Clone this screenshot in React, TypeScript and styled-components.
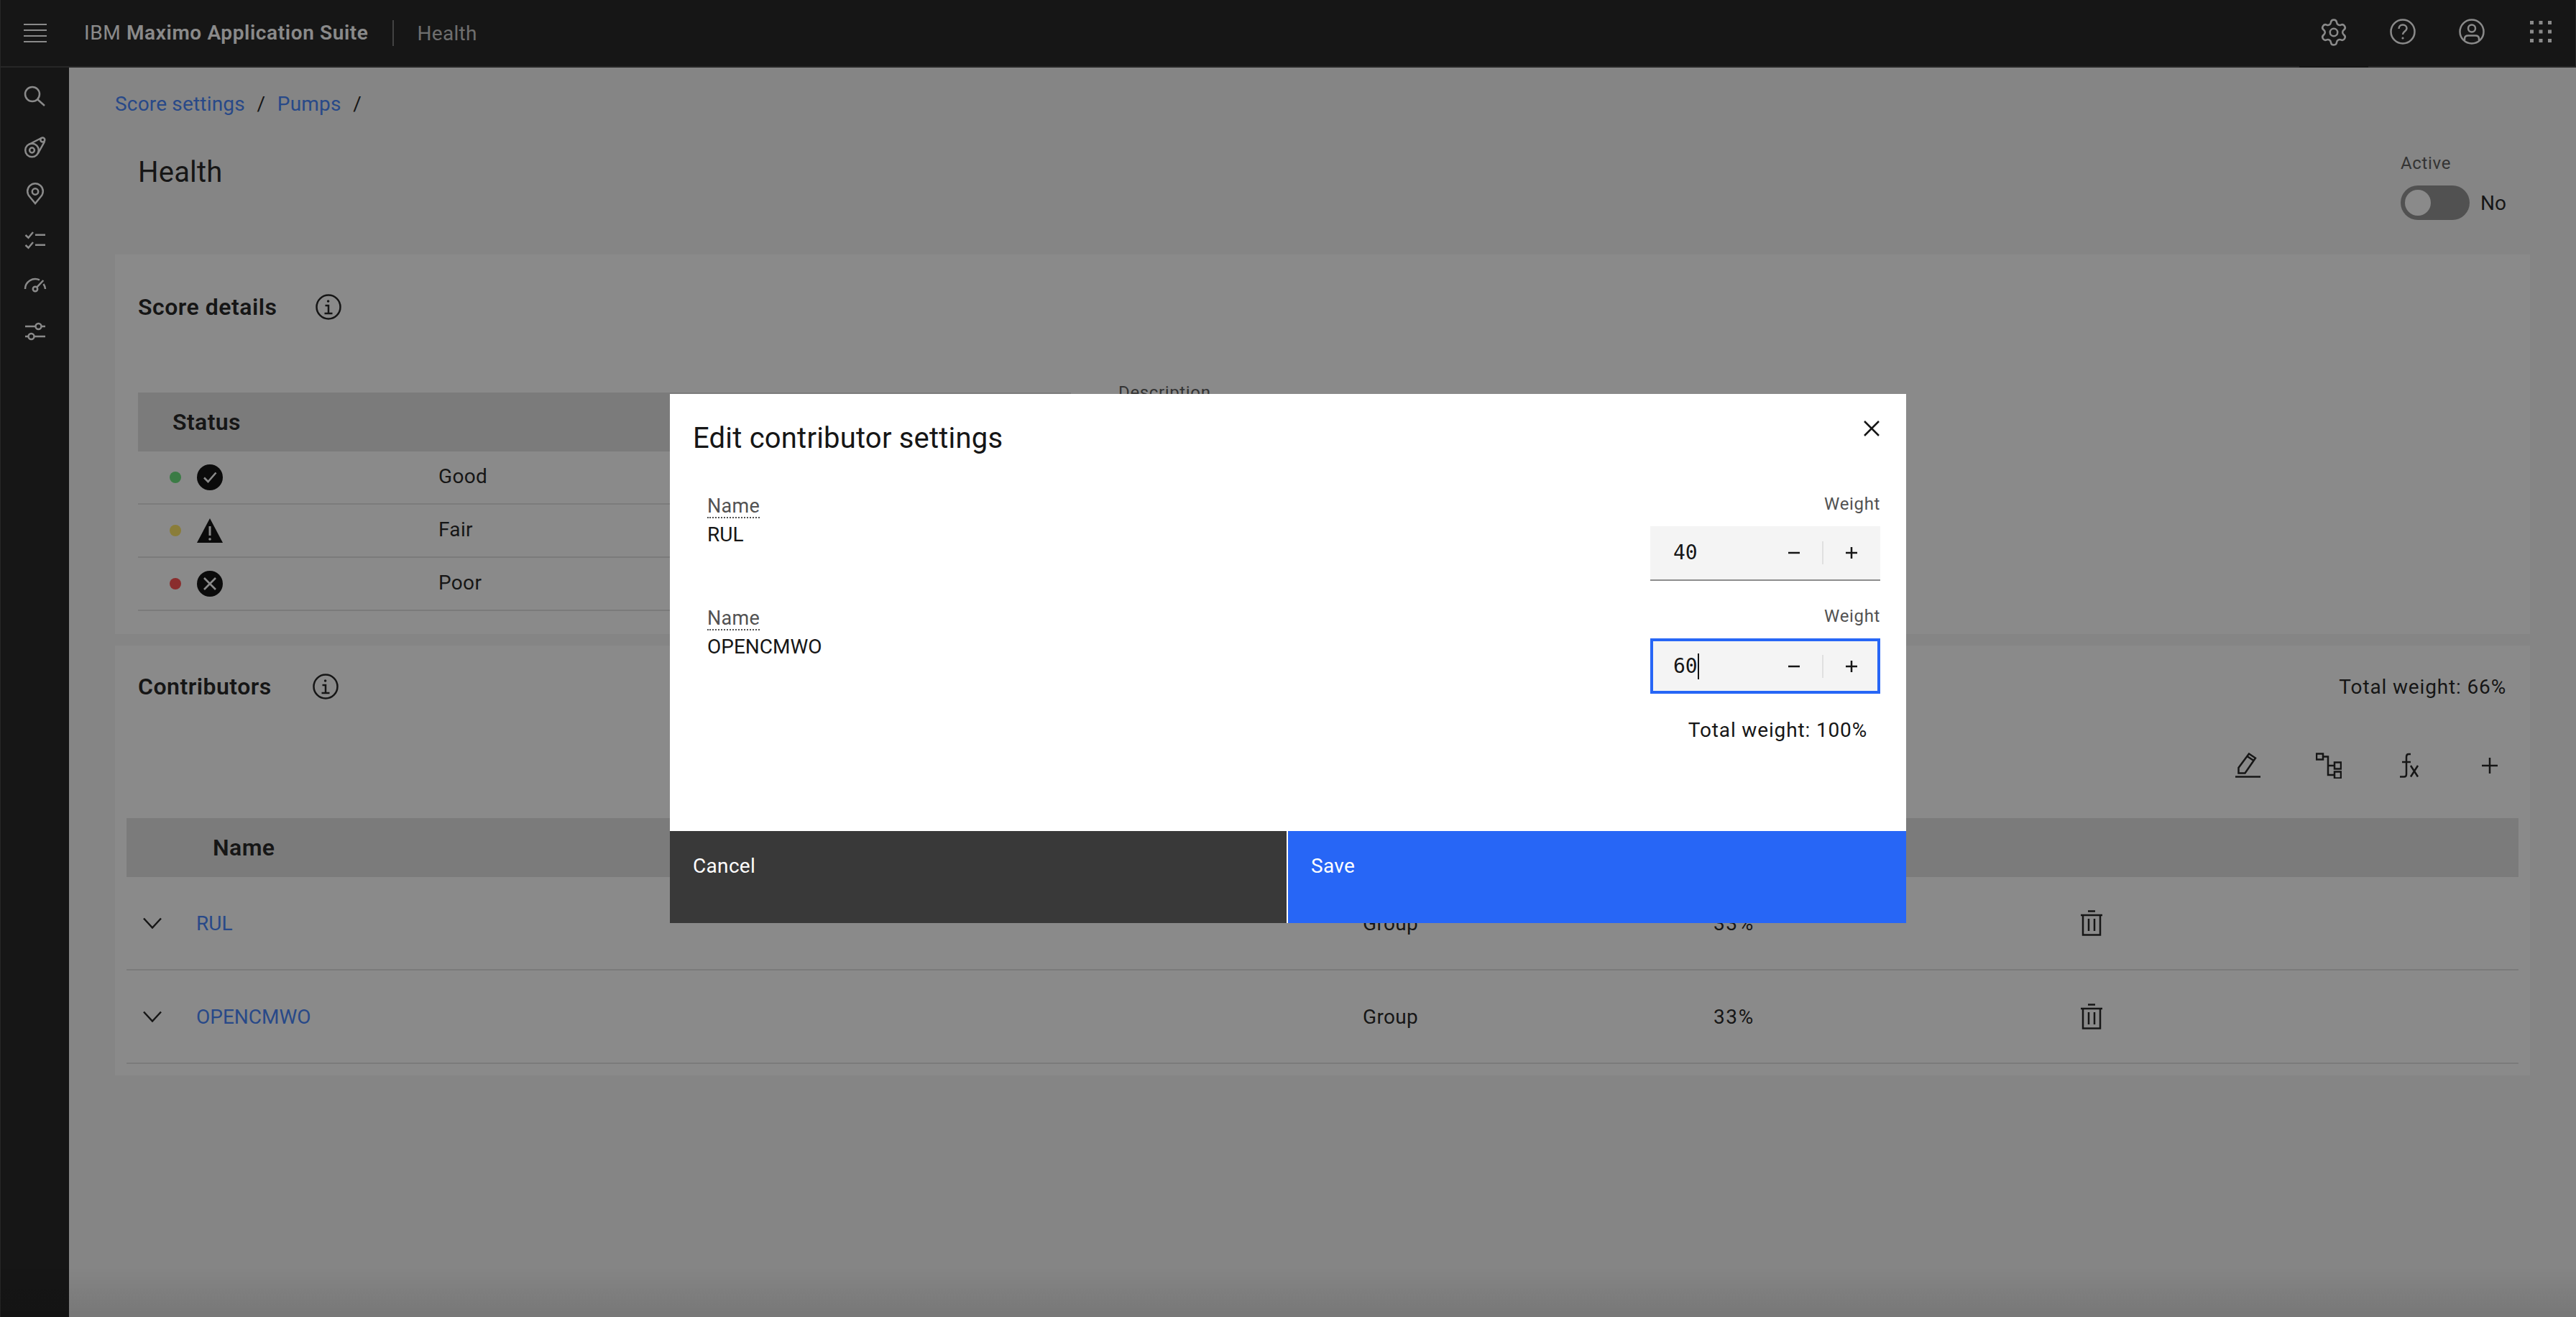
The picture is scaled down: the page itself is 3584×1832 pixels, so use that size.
import React from 'react';
import styled, { createGlobalStyle } from 'styled-components';
import { Settings } from 'lucide-react';

const GlobalStyle = createGlobalStyle`
  html, body {
    margin: 0;
    padding: 0;
    height: 100%;
    background: #f4f4f4;
    font-family: Roboto, "Liberation Sans", sans-serif;
    color: #161616;
    overflow: hidden;
  }
  * { box-sizing: border-box; }
`;

const Shell = styled.div`
  display: grid;
  grid-template-columns: 96px 1fr;
  grid-template-rows: 94px 1fr;
  height: 100vh;
`;

/* top bar */
const TopBar = styled.header`
  grid-column: 1 / -1;
  display: flex;
  align-items: center;
  height: 94px;
  background: #161616;
  border-bottom: 2px solid #393939;
  border-left: 1px solid #393939;
  border-right: 1px solid #393939;
`;

const MenuButton = styled.div`
  width: 95px;
  height: 92px;
  display: flex;
  flex-direction: column;
  align-items: center;
  justify-content: center;
  gap: 6px;
`;

const MenuLine = styled.span`
  display: block;
  width: 32px;
  height: 2px;
  background: #fff;
`;

const Brand = styled.div`
  margin-left: 21px;
  font-size: 28px;
  color: #fff;
  letter-spacing: 0.62px;
  padding-right: 33px;
  border-right: 2px solid #6f6f6f;
  height: 36px;
  line-height: 36px;
  strong { font-weight: 600; }
`;

const AppName = styled.div`
  margin-left: 33px;
  font-size: 28px;
  color: #c6c6c6;
  letter-spacing: 0.3px;
`;

const TopActions = styled.div`
  margin-left: auto;
  display: flex;
`;

const TopAction = styled.div<{ $active?: boolean }>`
  width: 96px;
  height: ${(p) => (p.$active ? '94px' : '92px')};
  margin-top: ${(p) => (p.$active ? '2px' : '0')};
  padding-bottom: ${(p) => (p.$active ? '4px' : '0')};
  background: #161616;
  display: flex;
  align-items: center;
  justify-content: center;
  color: #fff;
`;

/* left rail */
const Rail = styled.nav`
  background: #161616;
  border-left: 1px solid #393939;
  padding-top: 7px;
  display: flex;
  flex-direction: column;
  color: #fff;
`;

const RailItem = styled.div<{ $gapBelow?: boolean }>`
  height: 64px;
  margin-bottom: ${(p) => (p.$gapBelow ? '8px' : '0')};
  display: flex;
  align-items: center;
  justify-content: center;
`;

/* page */
const Main = styled.main`
  padding: 33px 64px 0;
  min-width: 0;
`;

const Breadcrumb = styled.div`
  display: flex;
  height: 36px;
  align-items: center;
  font-size: 28px;
  line-height: 36px;
  letter-spacing: 0.18px;
`;

const Crumb = styled.a`
  color: #3a7cfb;
`;

const CrumbSep = styled.span`
  width: 45px;
  text-align: center;
`;

const PageHead = styled.div`
  height: 191px;
  display: flex;
  justify-content: space-between;
  padding: 0 33px 0 32px;
`;

const PageTitle = styled.h1`
  margin: 53px 0 0;
  font-size: 40px;
  line-height: 48px;
  font-weight: 400;
  letter-spacing: 0.2px;
`;

const ActiveField = styled.div`
  margin-top: 48px;
`;

const FieldLabel = styled.div`
  font-size: 24px;
  line-height: 32px;
  letter-spacing: 0.64px;
  color: #525252;
`;

const ToggleRow = styled.div`
  display: flex;
  align-items: center;
  margin-top: 15px;
  gap: 15px;
  font-size: 28px;
`;

const ToggleTrack = styled.div`
  width: 96px;
  height: 48px;
  border-radius: 24px;
  background: #8d8d8d;
  padding: 6px;
`;

const ToggleKnob = styled.div`
  width: 36px;
  height: 36px;
  border-radius: 50%;
  background: #fff;
`;

const Card = styled.section<{ $tight?: boolean }>`
  background: #fff;
  margin-bottom: 16px;
  padding: ${(p) => (p.$tight ? '37px 16px 16px' : '53px 32px 32px')};
`;

const CardHead = styled.div<{ $inset?: boolean }>`
  display: flex;
  align-items: center;
  padding: ${(p) => (p.$inset ? '0 17px 0 16px' : '0')};
`;

const CardTitle = styled.h2`
  margin: 0;
  font-size: 32px;
  line-height: 40px;
  font-weight: 600;
  letter-spacing: 0.5px;
`;

const InfoSlot = styled.span<{ $offset: number }>`
  display: flex;
  margin-left: ${(p) => p.$offset}px;
`;

const TotalWeight = styled.div`
  margin-left: auto;
  font-size: 28px;
  letter-spacing: 0.85px;
`;

/* score details */
const DetailsRow = styled.div`
  display: flex;
  margin-top: 99px;
  gap: 66px;
`;

const StatusTable = styled.div`
  width: 1298px;
`;

const DescriptionField = styled(FieldLabel)`
  margin-top: -16px;
`;

const HeadRow = styled.div`
  height: 82px;
  background: #e0e0e0;
  display: flex;
  align-items: center;
  font-size: 32px;
  font-weight: 600;
  letter-spacing: 0.4px;
`;

const StatusHead = styled(HeadRow)`
  padding-left: 48px;
`;

const StatusRow = styled.div`
  display: grid;
  grid-template-columns: 418px 1fr;
  align-items: center;
  height: 74px;
  border-bottom: 2px solid #e0e0e0;
  font-size: 28px;
  letter-spacing: 0.32px;
`;

const StatusCell = styled.div`
  display: flex;
  align-items: center;
  padding-left: 44px;
  gap: 22px;
`;

const StatusName = styled.span`
  padding-bottom: 4px;
`;

const Dot = styled.span<{ $color: string }>`
  width: 16px;
  height: 16px;
  border-radius: 50%;
  background: ${(p) => p.$color};
`;

/* contributors */
const Toolbar = styled.div`
  display: flex;
  justify-content: flex-end;
  gap: 48px;
  padding-right: 8px;
  margin: 58px 0 41px;
`;

const ToolButton = styled.div`
  width: 64px;
  height: 64px;
  display: flex;
  align-items: center;
  justify-content: center;
`;

const ContributorHead = styled(HeadRow)`
  padding-left: 120px;
`;

const ContributorRow = styled.div`
  display: grid;
  grid-template-columns: 97px 1623px 488px 508px 1fr;
  align-items: center;
  height: 130px;
  border-bottom: 2px solid #e0e0e0;
  font-size: 28px;
  letter-spacing: 0.32px;
`;

const ExpandCell = styled.div`
  display: flex;
  padding-left: 23px;
`;

const RowLink = styled.a`
  color: #3a7cfb;
  letter-spacing: 0;
`;

const Percent = styled.span`
  letter-spacing: 1.6px;
`;

/* modal */
const Overlay = styled.div`
  position: fixed;
  inset: 0;
  background:
    linear-gradient(to top, rgba(0, 0, 0, 0.1), rgba(0, 0, 0, 0) 70px),
    rgba(22, 22, 22, 0.5);
  display: flex;
  align-items: center;
  justify-content: center;
`;

const Modal = styled.div`
  position: relative;
  width: 1720px;
  height: 736px;
  background: #fff;
  display: flex;
  flex-direction: column;
`;

const CloseButton = styled.div`
  position: absolute;
  top: 0;
  right: 0;
  width: 96px;
  height: 96px;
  display: flex;
  align-items: center;
  justify-content: center;
`;

const ModalBody = styled.div`
  flex: 1;
  padding: 38px 36px 0 32px;
`;

const ModalTitle = styled.h3`
  margin: 0 0 51px;
  font-size: 40px;
  line-height: 48px;
  font-weight: 400;
  letter-spacing: 0.2px;
`;

const ContributorField = styled.div`
  display: flex;
  justify-content: space-between;
  padding-left: 20px;
  margin-bottom: 33px;
`;

const NameBlock = styled.div`
  padding-top: 4px;
`;

const NameLabel = styled.span`
  display: inline-block;
  font-size: 27px;
  line-height: 30px;
  letter-spacing: 0.3px;
  color: #525252;
  border-bottom: 2px dotted #525252;
`;

const NameValue = styled.div`
  margin-top: 5px;
  font-size: 28px;
  line-height: 36px;
`;

const WeightBlock = styled.div`
  width: 320px;
  display: flex;
  flex-direction: column;
  align-items: flex-end;
`;

const WeightLabel = styled(FieldLabel)`
  margin-bottom: 15px;
`;

const NumberInput = styled.div<{ $focused?: boolean }>`
  width: 320px;
  height: ${(p) => (p.$focused ? '77px' : '76px')};
  background: #f4f4f4;
  display: flex;
  align-items: center;
  padding-left: 32px;
  border-bottom: 2px solid #8d8d8d;
  ${(p) => p.$focused && 'border-bottom: 0; outline: 4px solid #2766f6; outline-offset: -4px;'}
`;

const NumberValue = styled.span`
  font-family: "DejaVu Sans Mono", "Liberation Mono", monospace;
  font-size: 28px;
  line-height: 36px;
  flex: 1;
  display: flex;
  align-items: center;
`;

const Caret = styled.span`
  display: inline-block;
  width: 2px;
  height: 36px;
  background: #161616;
`;

const StepButton = styled.div`
  width: 80px;
  height: 32px;
  display: flex;
  align-items: center;
  justify-content: center;
`;

const StepDivider = styled.span`
  width: 2px;
  height: 32px;
  background: #e0e0e0;
  margin: 0 -1px;
`;

const TotalLine = styled.div`
  text-align: right;
  margin-top: 3px;
  padding-right: 18px;
  font-size: 28px;
  line-height: 36px;
  letter-spacing: 0.85px;
`;

const ModalFooter = styled.div`
  display: grid;
  grid-template-columns: 858px 1fr;
  gap: 2px;
  height: 128px;
`;

const FooterButton = styled.div<{ $primary?: boolean }>`
  background: ${(p) => (p.$primary ? '#2766f6' : '#393939')};
  color: #fff;
  font-size: 28px;
  line-height: 36px;
  letter-spacing: 0.32px;
  padding: 31px 32px;
`;

/* icons, all on a pixel grid of their own */
const Line = styled.svg`
  fill: none;
  stroke: currentColor;
  stroke-width: 2.5;
  display: block;
  flex: none;
`;

const Ink = styled.span`
  display: flex;
  color: #161616;
`;

const RailSearch = () => (
  <Line width="32" height="32" viewBox="0 0 32 32">
    <circle cx="12" cy="14" r="10" />
    <path d="M19.5 21.5 29 30" />
  </Line>
);

const RailBelt = () => (
  <Line width="32" height="32" viewBox="0 0 32 32">
    <circle cx="11.5" cy="20" r="9.3" />
    <circle cx="11.5" cy="20" r="3.4" />
    <circle cx="26.3" cy="5.6" r="3" />
    <path d="M7 12 24.5 3M19.5 25 29 8" />
  </Line>
);

const RailPin = () => (
  <Line width="32" height="32" viewBox="0 0 32 32">
    <path d="M16 30 8.2 20.5A10.8 10.8 0 1 1 23.8 20.5Z" />
    <circle cx="16" cy="13.5" r="4.2" />
  </Line>
);

const RailChecklist = () => (
  <Line width="32" height="32" viewBox="0 0 32 32">
    <path d="M2.5 10 6.5 13.7 13 6M16 9.7H30M2.5 24 6.5 27.7 13 20M16 23.7H30" />
  </Line>
);

const RailGauge = () => (
  <Line width="32" height="32" viewBox="0 0 32 32">
    <path d="M2 21A14 14 0 0 1 22 8.4M27.5 14A14 14 0 0 1 30 21" />
    <circle cx="16" cy="21" r="3.2" />
    <path d="M18.2 18.6 27.3 9" />
  </Line>
);

const RailSliders = () => (
  <Line width="32" height="32" viewBox="0 0 32 32">
    <path d="M2 9H16.5M24.5 9H30M2 23H6.5M14.5 23H30" />
    <circle cx="20.5" cy="9" r="4" />
    <circle cx="10.5" cy="23" r="4" />
  </Line>
);

const HelpIcon = () => (
  <Line width="36" height="36" viewBox="0 0 36 36">
    <circle cx="18" cy="18" r="16.5" />
    <path d="M12.5 14C12.5 10.5 15 8.5 18 8.5S23.5 10.5 23.5 13.5C23.5 17.5 18 17.5 18 22" />
    <circle cx="18" cy="27" r="1.6" fill="currentColor" stroke="none" />
  </Line>
);

const UserIcon = () => (
  <Line width="36" height="36" viewBox="0 0 36 36">
    <circle cx="18" cy="18" r="16.5" />
    <circle cx="18" cy="13.5" r="5" />
    <path d="M8 30V28C8 25 10 23.5 13 23.5H23C26 23.5 28 25 28 28V30" />
  </Line>
);

const GridIcon = () => (
  <svg width="30" height="30" viewBox="0 0 30 30" fill="currentColor" style={{ display: 'block' }}>
    {[0, 12.5, 25].map((y) =>
      [0, 12.5, 25].map((x) => <rect key={`${x}-${y}`} x={x} y={y} width="5" height="5" />),
    )}
  </svg>
);

const InfoIcon = () => (
  <Line width="36" height="36" viewBox="0 0 36 36">
    <circle cx="18" cy="18" r="16.5" />
    <circle cx="17.6" cy="10" r="1.8" fill="currentColor" stroke="none" />
    <path d="M13.5 16H18V27M12.5 27H23.5" />
  </Line>
);

const CheckBadge = () => (
  <svg width="36" height="36" viewBox="0 0 36 36" style={{ display: 'block' }}>
    <circle cx="18" cy="18" r="18" fill="#000" />
    <path d="M10 18.5 15.5 24 26.5 11.5" fill="none" stroke="#fff" strokeWidth="2.6" />
  </svg>
);

const WarnBadge = () => (
  <svg width="36" height="36" viewBox="0 0 36 36" style={{ display: 'block' }}>
    <path d="M18 1 36 35H0Z" fill="#000" />
    <path d="M18 12V25" stroke="#fff" strokeWidth="3" />
    <circle cx="18" cy="30" r="1.8" fill="#fff" />
  </svg>
);

const ErrorBadge = () => (
  <svg width="36" height="36" viewBox="0 0 36 36" style={{ display: 'block' }}>
    <circle cx="18" cy="18" r="18" fill="#000" />
    <path d="M10 10 26 26M26 10 10 26" fill="none" stroke="#fff" strokeWidth="2.6" />
  </svg>
);

const EditIcon = () => (
  <Line width="36" height="36" viewBox="0 0 36 36">
    <path d="M0 33.5H35" />
    <path d="M4.5 28.5V21L19 1.5 28 7.5 13.5 28.5ZM16.5 5 25.5 11" />
  </Line>
);

const TreeIcon = () => (
  <Line width="36" height="36" viewBox="0 0 36 36">
    <rect x="1" y="1.5" width="9" height="8" />
    <rect x="26" y="13.5" width="9" height="9" />
    <rect x="26" y="26.5" width="9" height="9" />
    <path d="M10 5.5H17V31H26M17 18H26" />
  </Line>
);

const FunctionIcon = () => (
  <Line width="36" height="36" viewBox="0 0 36 36">
    <path d="M20 2H17C14.5 2 14 4 14 6V30C14 32 13 33.5 11 33.5H5M8 13H20" />
    <path d="M20 18 30 33.5M30 18 20 33.5" />
  </Line>
);

const PlusIcon = () => (
  <Line width="36" height="36" viewBox="0 0 36 36">
    <path d="M18 7V29M7 18H29" />
  </Line>
);

const TrashIcon = () => (
  <Line width="36" height="36" viewBox="0 0 36 36">
    <path d="M13 1.5H23M3 7H33M6 7V34.5H30V7M14 12V29M22 12V29" />
  </Line>
);

const ChevronIcon = () => (
  <Line width="26" height="16" viewBox="0 0 26 16">
    <path d="M1 1.5 13 14.5 25 1.5" />
  </Line>
);

const CloseIcon = () => (
  <Line width="22" height="22" viewBox="0 0 22 22">
    <path d="M1 1 21 21M21 1 1 21" />
  </Line>
);

const MinusGlyph = () => (
  <Line width="18" height="18" viewBox="0 0 18 18">
    <path d="M1 9H17" />
  </Line>
);

const PlusGlyph = () => (
  <Line width="18" height="18" viewBox="0 0 18 18">
    <path d="M1 9H17M9 1V17" />
  </Line>
);

const statuses = [
  { label: 'Good', color: '#60e074', badge: <CheckBadge /> },
  { label: 'Fair', color: '#ffe45c', badge: <WarnBadge /> },
  { label: 'Poor', color: '#ff4444', badge: <ErrorBadge /> },
];

const contributors = ['RUL', 'OPENCMWO'];

const weights = [
  { name: 'RUL', value: '40' },
  { name: 'OPENCMWO', value: '60', focused: true },
];

export default function App() {
  return (
    <>
      <GlobalStyle />
      <Shell>
        <TopBar>
          <MenuButton>
            <MenuLine />
            <MenuLine />
            <MenuLine />
            <MenuLine />
          </MenuButton>
          <Brand>
            IBM <strong>Maximo Application Suite</strong>
          </Brand>
          <AppName>Health</AppName>
          <TopActions>
            <TopAction $active>
              <Settings size={42} strokeWidth={1.45} />
            </TopAction>
            <TopAction>
              <HelpIcon />
            </TopAction>
            <TopAction>
              <UserIcon />
            </TopAction>
            <TopAction>
              <GridIcon />
            </TopAction>
          </TopActions>
        </TopBar>

        <Rail>
          <RailItem $gapBelow>
            <RailSearch />
          </RailItem>
          <RailItem>
            <RailBelt />
          </RailItem>
          <RailItem>
            <RailPin />
          </RailItem>
          <RailItem>
            <RailChecklist />
          </RailItem>
          <RailItem>
            <RailGauge />
          </RailItem>
          <RailItem>
            <RailSliders />
          </RailItem>
        </Rail>

        <Main>
          <Breadcrumb>
            <Crumb>Score settings</Crumb>
            <CrumbSep>/</CrumbSep>
            <Crumb>Pumps</Crumb>
            <CrumbSep>/</CrumbSep>
          </Breadcrumb>

          <PageHead>
            <PageTitle>Health</PageTitle>
            <ActiveField>
              <FieldLabel>Active</FieldLabel>
              <ToggleRow>
                <ToggleTrack>
                  <ToggleKnob />
                </ToggleTrack>
                No
              </ToggleRow>
            </ActiveField>
          </PageHead>

          <Card>
            <CardHead>
              <CardTitle>Score details</CardTitle>
              <InfoSlot $offset={54}>
                <Ink>
                  <InfoIcon />
                </Ink>
              </InfoSlot>
            </CardHead>
            <DetailsRow>
              <StatusTable>
                <StatusHead>Status</StatusHead>
                {statuses.map((s) => (
                  <StatusRow key={s.label}>
                    <StatusCell>
                      <Dot $color={s.color} />
                      {s.badge}
                    </StatusCell>
                    <StatusName>{s.label}</StatusName>
                  </StatusRow>
                ))}
              </StatusTable>
              <DescriptionField>Description</DescriptionField>
            </DetailsRow>
          </Card>

          <Card $tight>
            <CardHead $inset>
              <CardTitle>Contributors</CardTitle>
              <InfoSlot $offset={57}>
                <Ink>
                  <InfoIcon />
                </Ink>
              </InfoSlot>
              <TotalWeight>Total weight: 66%</TotalWeight>
            </CardHead>
            <Toolbar>
              <ToolButton>
                <EditIcon />
              </ToolButton>
              <ToolButton>
                <TreeIcon />
              </ToolButton>
              <ToolButton>
                <FunctionIcon />
              </ToolButton>
              <ToolButton>
                <PlusIcon />
              </ToolButton>
            </Toolbar>
            <ContributorHead>Name</ContributorHead>
            {contributors.map((name) => (
              <ContributorRow key={name}>
                <ExpandCell>
                  <ChevronIcon />
                </ExpandCell>
                <RowLink>{name}</RowLink>
                <span>Group</span>
                <Percent>33%</Percent>
                <TrashIcon />
              </ContributorRow>
            ))}
          </Card>
        </Main>
      </Shell>

      <Overlay>
        <Modal>
          <CloseButton>
            <CloseIcon />
          </CloseButton>
          <ModalBody>
            <ModalTitle>Edit contributor settings</ModalTitle>
            {weights.map((w) => (
              <ContributorField key={w.name}>
                <NameBlock>
                  <NameLabel>Name</NameLabel>
                  <NameValue>{w.name}</NameValue>
                </NameBlock>
                <WeightBlock>
                  <WeightLabel>Weight</WeightLabel>
                  <NumberInput $focused={w.focused}>
                    <NumberValue>
                      {w.value}
                      {w.focused && <Caret />}
                    </NumberValue>
                    <StepButton>
                      <MinusGlyph />
                    </StepButton>
                    <StepDivider />
                    <StepButton>
                      <PlusGlyph />
                    </StepButton>
                  </NumberInput>
                </WeightBlock>
              </ContributorField>
            ))}
            <TotalLine>Total weight: 100%</TotalLine>
          </ModalBody>
          <ModalFooter>
            <FooterButton>Cancel</FooterButton>
            <FooterButton $primary>Save</FooterButton>
          </ModalFooter>
        </Modal>
      </Overlay>
    </>
  );
}
